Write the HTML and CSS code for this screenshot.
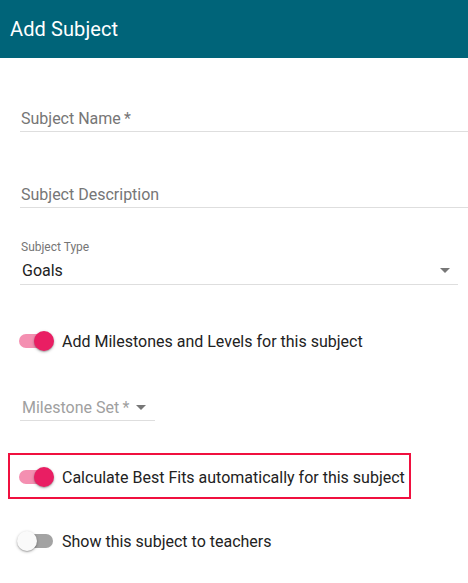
FILE: index.html
```html
<!DOCTYPE html>
<html>
<head>
<meta charset="utf-8">
<link rel="stylesheet" href="styles.css">
</head>
<body>
<header class="topbar"><h1 class="title">Add Subject</h1></header>
<main class="form">
  <div class="field field-name full"><span class="placeholder">Subject Name&thinsp;*</span></div>
  <div class="field field-desc full"><span class="placeholder">Subject Description</span></div>
  <div class="select-field">
    <div class="small-label">Subject Type</div>
    <div class="select-box"><span class="value">Goals</span><span class="arrow"></span></div>
  </div>
  <div class="toggle-row row-milestones">
    <span class="switch on"><span class="track"></span><span class="thumb"></span></span>
    <span class="toggle-label">Add Milestones and Levels for this subject</span>
  </div>
  <div class="milestone-select"><span class="disabled-text">Milestone Set&thinsp;*</span><span class="arrow"></span></div>
  <div class="highlight">
    <div class="toggle-row inbox">
      <span class="switch on"><span class="track"></span><span class="thumb"></span></span>
      <span class="toggle-label">Calculate Best Fits automatically for this subject</span>
    </div>
  </div>
  <div class="toggle-row row-teachers">
    <span class="switch off"><span class="track"></span><span class="thumb"></span></span>
    <span class="toggle-label">Show this subject to teachers</span>
  </div>
</main>
</body>
</html>
```
FILE: styles.css
```css
* { box-sizing: border-box; }
html, body { margin: 0; padding: 0; background: #fff; }
body { font-family: Roboto, "Noto Sans", "Liberation Sans", sans-serif; width: 468px; height: 583px; overflow: hidden; }

.topbar { height: 58px; background: #006479; display: flex; align-items: center; padding-left: 10px; padding-bottom: 1px; }
.title { margin: 0; color: #fff; font-size: 20px; font-weight: 400; letter-spacing: 0.1px; }

.form { padding-left: 20px; display: flex; flex-direction: column; align-items: flex-start; }

.field { padding: 6px 0 3px 1px; line-height: 19px; font-size: 16px; border-bottom: 1px solid #dedede; }
.full { width: 460px; }
.field-name { margin-top: 45px; }
.field-desc { margin-top: 47px; }
.placeholder { color: #767676; }

.select-field { margin-top: 32px; width: 438px; }
.small-label { font-size: 12px; line-height: 14px; color: #767676; padding-left: 1px; }
.select-box { display: flex; align-items: center; justify-content: space-between; padding: 7px 8px 4px 2px; border-bottom: 1px solid #dedede; }
.value { font-size: 16px; line-height: 19px; color: #222; }
.arrow { width: 0; height: 0; border-left: 5px solid transparent; border-right: 5px solid transparent; border-top: 5px solid #777; }

.toggle-row { display: flex; align-items: center; height: 38px; }
.row-milestones { margin-top: 37px; margin-left: -3px; }
.row-teachers { margin-top: 23px; margin-left: -3px; }
.toggle-label { margin-left: 7px; font-size: 16px; color: #222; white-space: nowrap; }

.switch { position: relative; width: 38px; height: 20px; flex: none; }
.switch .track { position: absolute; left: 2px; top: 3px; width: 34px; height: 14px; border-radius: 7px; }
.switch .thumb { position: absolute; top: 0; width: 20px; height: 20px; border-radius: 50%; box-shadow: 0 1px 3px rgba(0,0,0,0.3), 0 1px 1px rgba(0,0,0,0.14); }
.switch.on .track { background: #f48fb1; }
.switch.on .thumb { left: 17px; background: #e91e63; }
.switch.off .track { background: #a3a3a3; }
.switch.off .thumb { left: 0; background: #fafafa; }

.milestone-select { margin-top: 32px; width: 135px; display: flex; align-items: center; justify-content: space-between; padding: 6px 9px 3px 2px; border-bottom: 1px solid #dedede; }
.disabled-text { font-size: 16px; line-height: 19px; color: #a0a0a0; }

.highlight { margin-top: 32px; margin-left: -12px; border: 2px solid #f0103f; padding: 3px 4px 1px 7px; }
.inbox { height: 38px; }
```
